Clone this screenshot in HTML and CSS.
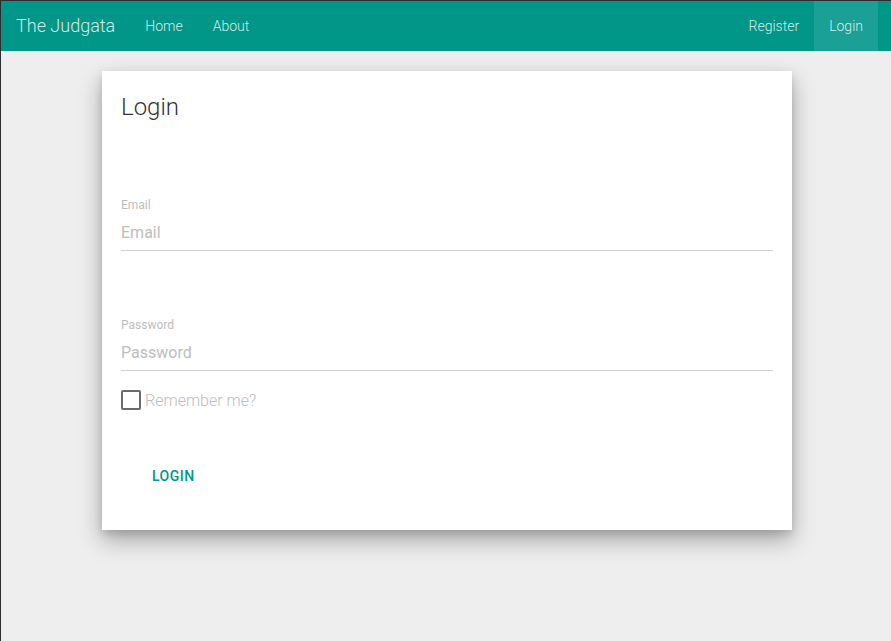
FILE: index.html
```html
<!DOCTYPE html>
<html lang="en">
<head>
<meta charset="utf-8">
<title>Log in - The Judgata</title>
<link rel="stylesheet" href="styles.css">
</head>
<body>
<div class="page">
  <nav class="navbar">
    <a class="brand" href="#">The Judgata</a>
    <ul class="nav">
      <li><a href="#">Home</a></li>
      <li><a href="#">About</a></li>
    </ul>
    <ul class="nav nav-right">
      <li><a href="#">Register</a></li>
      <li class="active"><a href="#">Login</a></li>
    </ul>
  </nav>
  <main class="container">
    <section class="card">
      <h2 class="card-title">Login</h2>
      <form class="form">
        <div class="field">
          <label class="field-label" for="email">Email</label>
          <input class="field-input" id="email" type="email" placeholder="Email">
        </div>
        <div class="field field-second">
          <label class="field-label" for="password">Password</label>
          <input class="field-input" id="password" type="password" placeholder="Password">
        </div>
        <label class="check">
          <span class="check-box"></span>
          <span class="check-text">Remember me?</span>
        </label>
        <div class="actions">
          <button class="btn" type="button">Login</button>
        </div>
      </form>
    </section>
  </main>
</div>
</body>
</html>
```
FILE: styles.css
```css
* { box-sizing: border-box; }
html, body { margin: 0; padding: 0; }
body {
  font-family: Roboto, "Noto Sans", Arial, sans-serif;
  background: #eeeeee;
}
.page {
  min-height: 100vh;
  border-top: 1px solid #2d2d2d;
  border-left: 1px solid #2d2d2d;
  background: #eeeeee;
}
.navbar {
  display: flex;
  align-items: stretch;
  height: 50px;
  background: #009688;
  padding-right: 13px;
}
.brand {
  display: block;
  padding: 15px 15px;
  font-size: 18px;
  line-height: 20px;
  font-weight: 300;
  color: rgba(255, 255, 255, 0.84);
  text-decoration: none;
}
.nav {
  display: flex;
  list-style: none;
  margin: 0;
  padding: 0;
}
.nav-right { margin-left: auto; }
.nav a {
  display: block;
  padding: 15px 15px;
  font-size: 14px;
  line-height: 20px;
  font-weight: 300;
  color: rgba(255, 255, 255, 0.84);
  text-decoration: none;
}
.nav .active a { background: rgba(255, 255, 255, 0.1); }
.container {
  width: 690px;
  margin: 20px auto 0;
  position: relative;
  left: 1px;
}
.card {
  background: #fff;
  padding: 19px 19px 36px;
  box-shadow: 0 10px 22px rgba(0, 0, 0, 0.3), 0 4px 8px rgba(0, 0, 0, 0.12);
}
.card-title {
  margin: 4px 0 0;
  font-size: 24px;
  line-height: 26.4px;
  font-weight: 300;
  color: rgba(0, 0, 0, 0.84);
}
.form { display: flex; flex-direction: column; }
.field { display: flex; flex-direction: column; margin-top: 77px; }
.field-second { margin-top: 66px; }
.field-label {
  font-size: 12px;
  line-height: 16px;
  color: #bdbdbd;
  margin-bottom: 2px;
}
.field-input {
  display: block;
  width: 100%;
  height: 36px;
  padding: 0;
  border: 0;
  border-bottom: 1px solid #d2d2d2;
  font-family: inherit;
  font-size: 16px;
  color: #333;
  background: transparent;
  outline: none;
}
.field-input::placeholder { color: #bdbdbd; }
.check {
  display: flex;
  align-items: center;
  gap: 4px;
  margin-top: 19px;
  height: 20px;
}
.check-box {
  width: 20px;
  height: 20px;
  border: 2px solid #6b6b6b;
  border-radius: 2px;
}
.check-text {
  font-size: 16px;
  line-height: 20px;
  font-weight: 300;
  color: #bdbdbd;
  position: relative;
  top: 1px;
}
.actions { margin-top: 48px; }
.btn {
  display: inline-block;
  margin-left: 1px;
  padding: 8px 30px;
  border: 0;
  background: transparent;
  font-family: inherit;
  font-size: 14px;
  line-height: 20px;
  font-weight: 500;
  letter-spacing: 0.5px;
  text-transform: uppercase;
  color: #009688;
}
```
